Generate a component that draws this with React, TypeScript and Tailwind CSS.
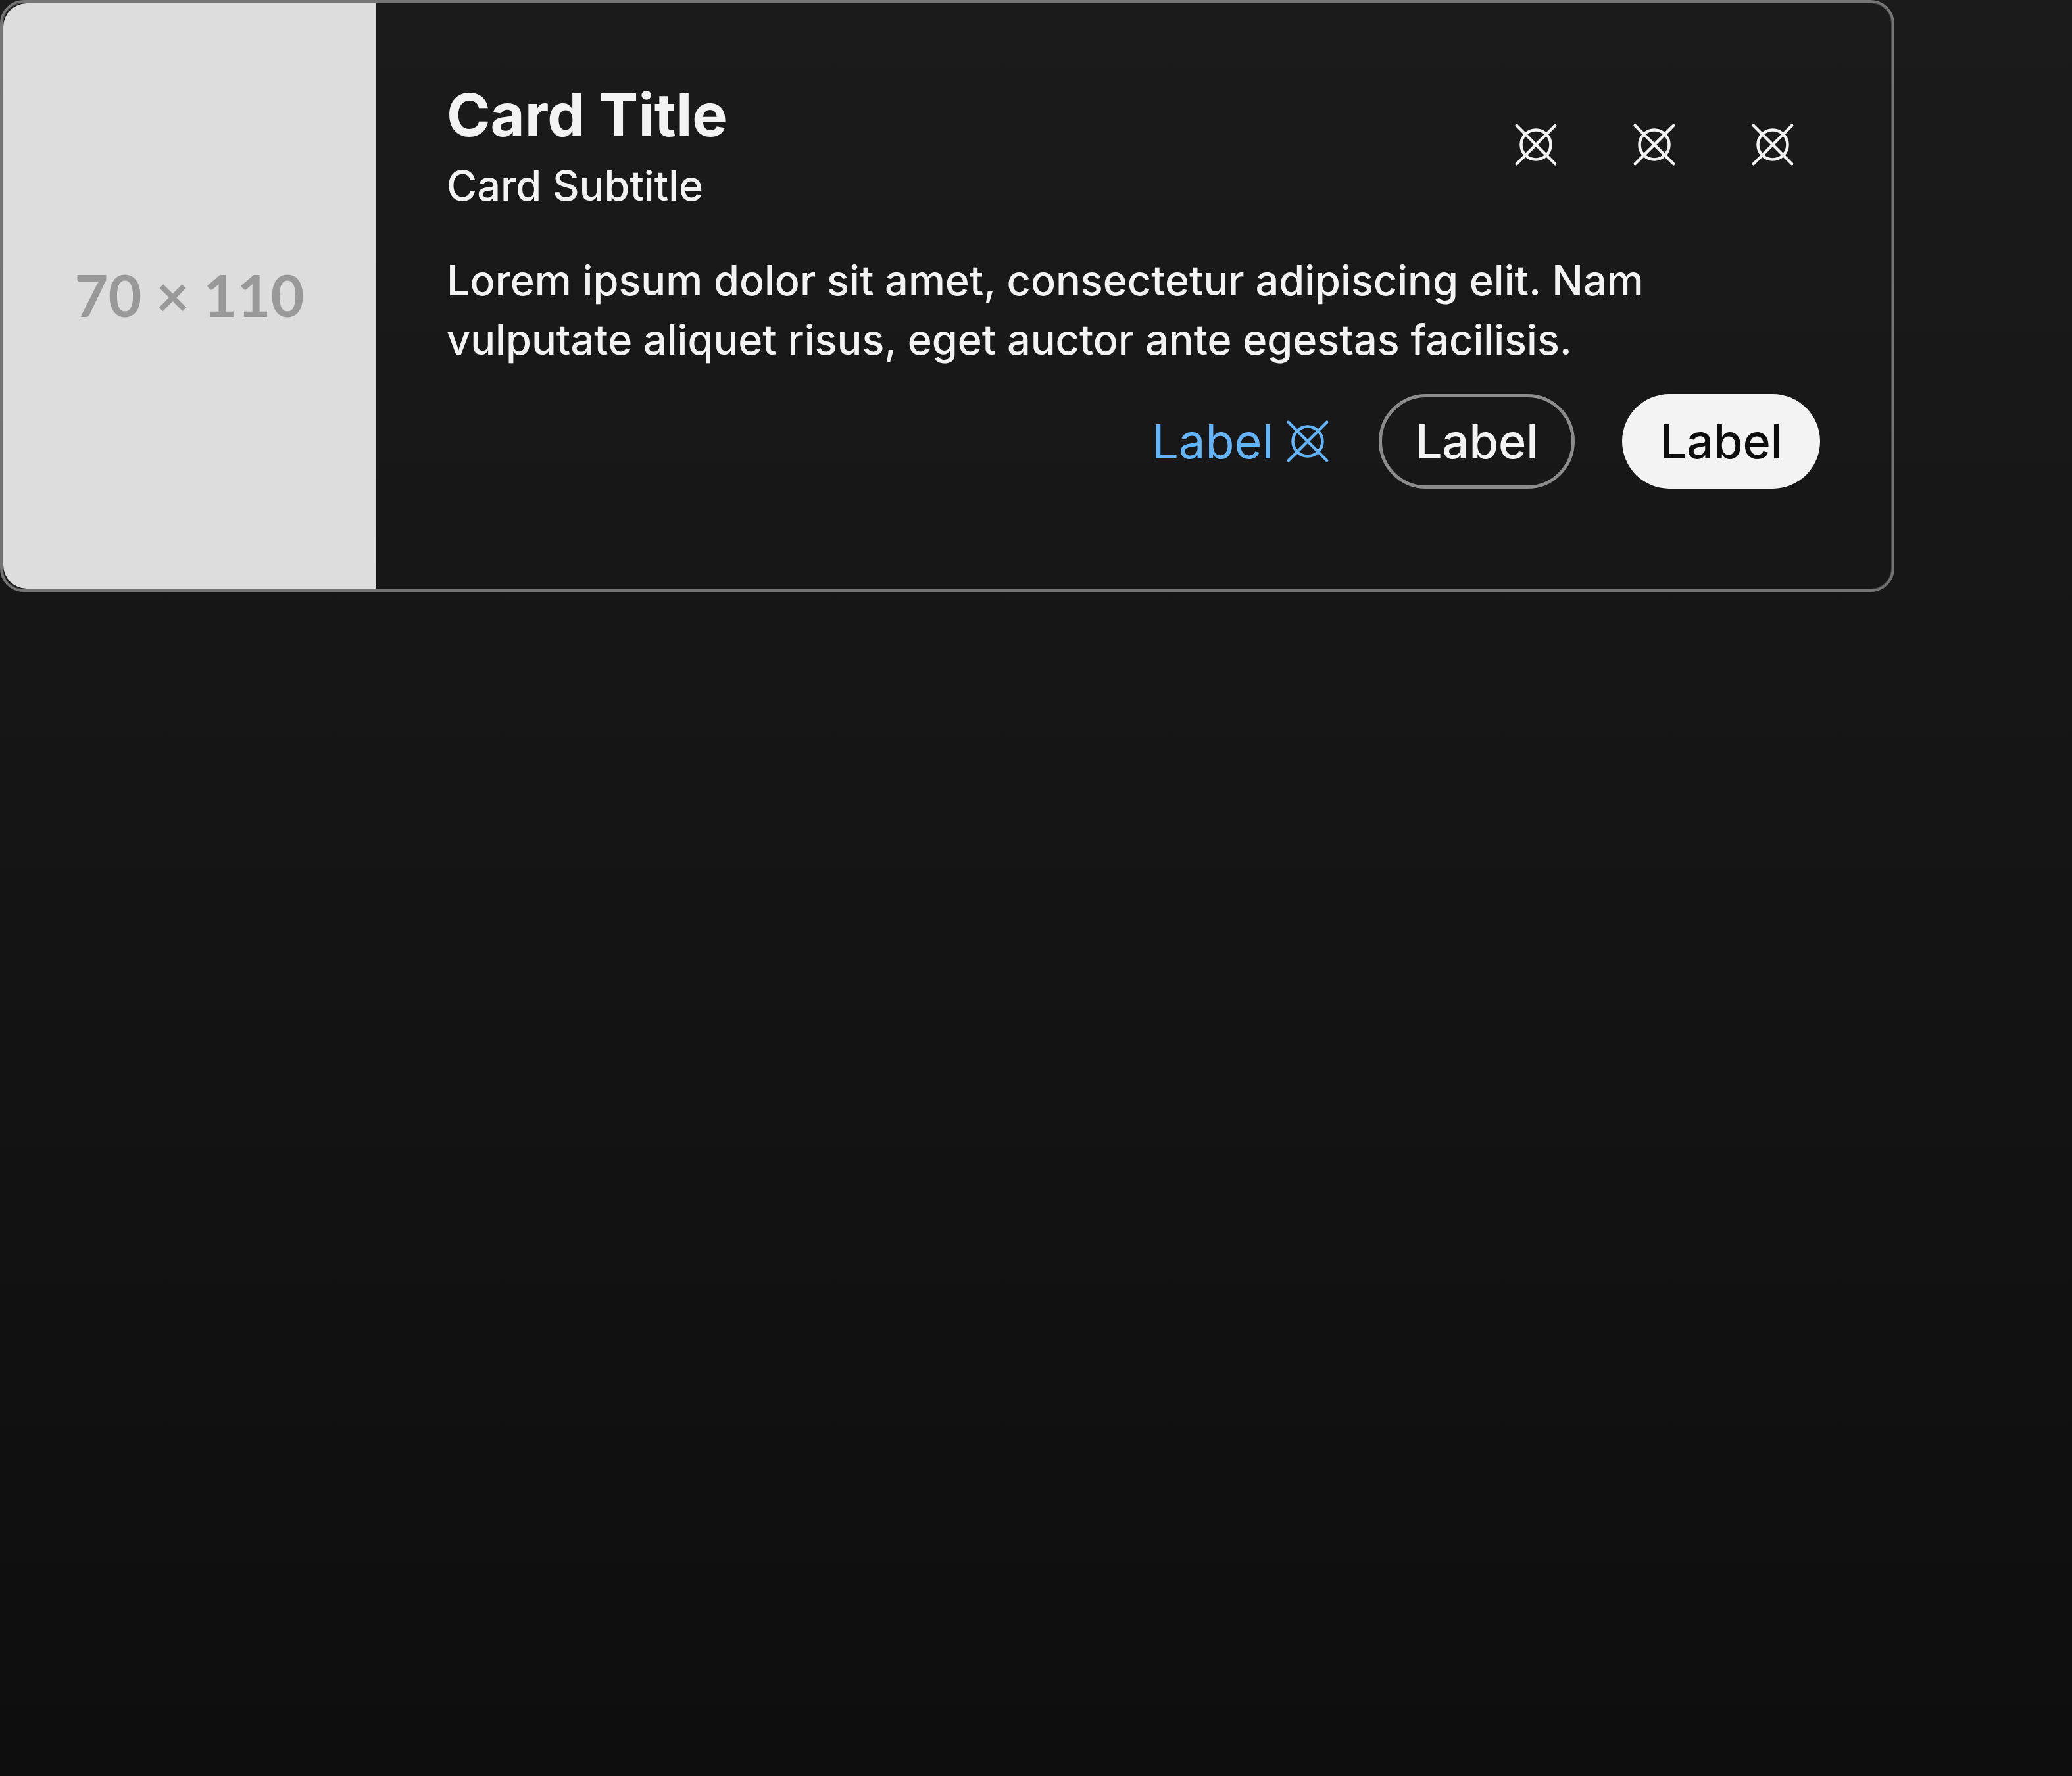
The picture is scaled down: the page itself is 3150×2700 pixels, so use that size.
import React from "react";

function OptionsIcon() {
  return (
    <svg
      className="size-18 shrink-0"
      viewBox="0 0 16 16"
      fill="none"
      stroke="currentColor"
      strokeLinecap="round"
      aria-hidden="true"
    >
      <circle cx="8" cy="8" r="5" />
      <path d="M1.5 1.5l13 13M14.5 1.5l-13 13" />
    </svg>
  );
}

function IconButton({ label }: { label: string }) {
  return (
    <button type="button" aria-label={label} className="flex size-36 items-center justify-center rounded-full">
      <OptionsIcon />
    </button>
  );
}

export default function App() {
  return (
    <main className="min-h-screen bg-linear-to-b from-[#1b1b1b] to-[#0e0e0e] font-['Inter',sans-serif] text-[#f3f3f3]">
      <article className="w-full max-w-[2880px] rounded-[36px] border-4 border-white/40">
        <div className="flex rounded-[32px] border border-white/20">
          <div
            role="img"
            aria-label="70 × 110 placeholder"
            className="flex h-[890px] w-[566px] shrink-0 items-center justify-center rounded-l-[36px] bg-[#dddddd] pb-1 font-['Lato',sans-serif] text-[88px] font-bold text-[#999999]"
          >
            70 × 110
          </div>
          <div className="min-w-0 grow p-27">
            <header className="flex items-center justify-between">
              <div>
                <h2 className="text-[90px] leading-[124px] font-bold [font-variation-settings:'opsz'_20]">Card Title</h2>
                <p className="text-[63px] leading-[90px] font-medium [font-variation-settings:'opsz'_14]">Card Subtitle</p>
              </div>
              <div className="flex gap-9">
                <IconButton label="First action" />
                <IconButton label="Second action" />
                <IconButton label="Third action" />
              </div>
            </header>
            <p className="mt-[54px] text-[63px] leading-[90px] font-medium [font-variation-settings:'opsz'_14]">
              Lorem ipsum dolor sit amet, consectetur adipiscing elit. Nam vulputate aliquet risus, eget auctor ante
              egestas facilisis.
            </p>
            <div className="mt-[38px] flex items-center justify-end gap-18 text-[72px] leading-[108px] [font-variation-settings:'opsz'_16]">
              <a href="#" className="flex items-center gap-4 text-[#64b4fa]">
                Label
                <OptionsIcon />
              </a>
              <button
                type="button"
                className="flex h-36 items-center rounded-full border-[5px] border-white/50 px-[51px] font-medium"
              >
                Label
              </button>
              <button
                type="button"
                className="flex h-36 items-center rounded-full bg-[#f3f3f3] px-[57px] font-medium text-[#0d0d0d]"
              >
                Label
              </button>
            </div>
          </div>
        </div>
      </article>
    </main>
  );
}
